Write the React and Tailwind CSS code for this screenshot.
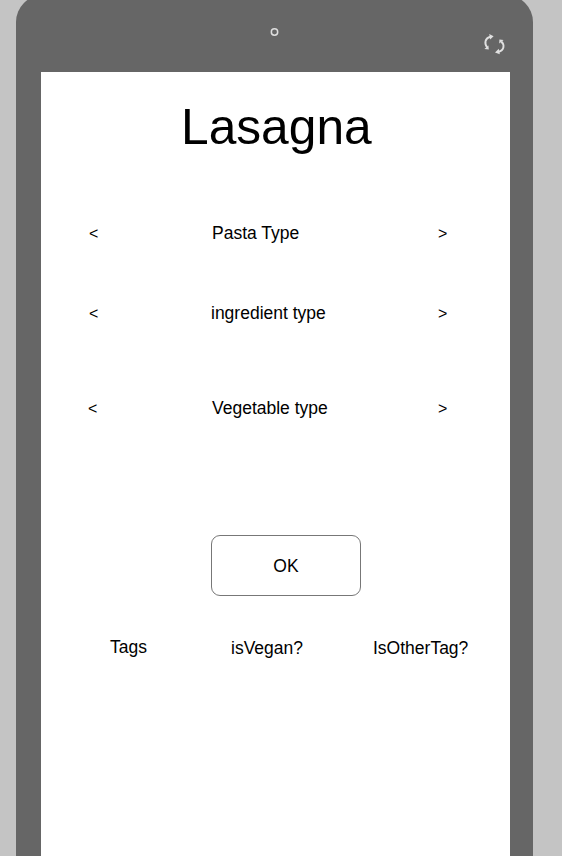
function Selector({ label, className, labelClass, prevClass }) {
  return (
    <div className={`flex h-6 items-center ${className}`}>
      <button className={`mt-0.5 shrink-0 text-left text-[16px] ${prevClass}`}>&lt;</button>
      <span className={`shrink-0 whitespace-nowrap ${labelClass}`}>{label}</span>
      <button className="mt-0.5 shrink-0 text-[16px]">&gt;</button>
    </div>
  );
}

export default function App() {
  return (
    <div className="h-[856px] w-[562px] overflow-hidden bg-[#c4c4c4] pl-4 font-['Liberation_Sans',Arial,sans-serif] text-[17.5px] leading-6 text-black">
      <div className="-mt-[5px] flex h-[900px] w-[517px] flex-col rounded-[27px] bg-[#666666] pt-[5px]">
        <header className="flex h-[72px] shrink-0 justify-between pl-[254px] pr-[27px]">
          <svg className="mt-7 size-[9px]" viewBox="0 0 9 9" fill="none">
            <circle cx="4.5" cy="4" r="3.2" stroke="#dedede" strokeWidth="1.5" />
          </svg>
          <svg className="mt-[33px] h-[22px] w-[23px]" viewBox="0 0 23 22" fill="none">
            <path d="M4.2 14.5C1 10.5 2 5 7.5 3.8M18.3 8.5C22 12 21 17.5 15.5 18.8" stroke="#e0e0e0" strokeWidth="1.9" />
            <path d="M6.2 1L10.6 3.2L7.2 6.6ZM1.4 16L5.4 12.6L5.8 16.6ZM16.2 10.6L16.4 6.4L20.6 7ZM15.8 15.8L12 19.6L16.8 21.2Z" fill="#e0e0e0" />
          </svg>
        </header>
        <main className="ml-[25px] flex w-[468.5px] grow flex-col bg-white">
          <h1 className="mt-[26px] pl-[140px] text-[49.7px] leading-[58px]">Lasagna</h1>
          <Selector label="Pasta Type" className="mt-[65px] pl-12" prevClass="w-[123px]" labelClass="w-[226px]" />
          <Selector label="ingredient type" className="mt-14 pl-12" prevClass="w-[122px]" labelClass="w-[227px]" />
          <Selector label="Vegetable type" className="mt-[71px] pl-[47px]" prevClass="w-[124px]" labelClass="w-[226px]" />
          <button className="ml-[170px] mt-[115px] h-[61px] w-[150px] rounded-[9px] border border-[#777] pt-px">OK</button>
          <footer className="mt-[39px] flex pl-[69px]">
            <span className="w-[121px]">Tags</span>
            <span className="mt-px w-[142px]">isVegan?</span>
            <span className="mt-px">IsOtherTag?</span>
          </footer>
        </main>
      </div>
    </div>
  );
}
